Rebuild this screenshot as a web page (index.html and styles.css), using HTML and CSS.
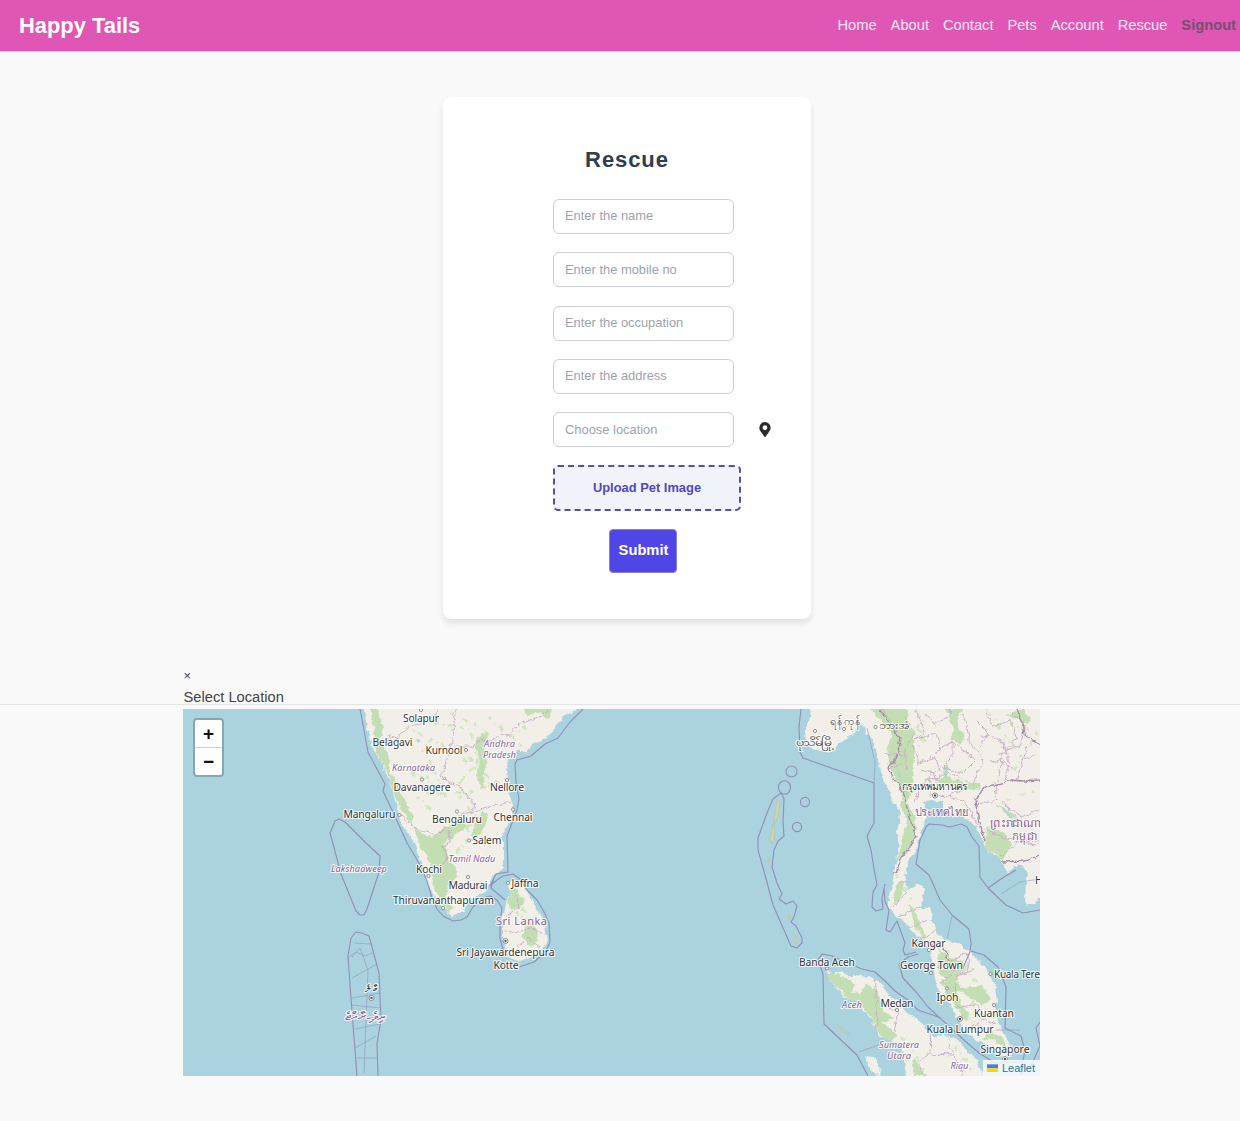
FILE: index.html
```html
<!DOCTYPE html>
<html lang="en">
<head>
<meta charset="utf-8">
<title>Happy Tails</title>
<link rel="stylesheet" href="styles.css">
</head>
<body>
<header class="navbar">
  <div class="brand">Happy Tails</div>
  <nav class="links"><a>Home</a><a>About</a><a>Contact</a><a>Pets</a><a>Account</a><a>Rescue</a><a class="signout">Signout</a></nav>
</header>
<main>
  <form class="card">
    <h1>Rescue</h1>
    <input type="text" placeholder="Enter the name">
    <input type="text" placeholder="Enter the mobile no">
    <input type="text" placeholder="Enter the occupation">
    <input type="text" placeholder="Enter the address">
    <div class="location">
      <input type="text" placeholder="Choose location">
      <svg class="pin" viewBox="0 0 384 512"><path d="M172 502C27 291 0 270 0 192a192 192 0 0 1 384 0c0 78-27 99-172 310a24 24 0 0 1-40 0zM192 272a80 80 0 1 0 0-160 80 80 0 0 0 0 160z"/></svg>
    </div>
    <label class="upload">Upload Pet Image</label>
    <button type="button" class="submit">Submit</button>
  </form>
  <section class="picker">
    <div class="picker-head"><div class="close">×</div><div class="picker-title">Select Location</div></div>
    <div class="map">
      <svg class="tiles" viewBox="183 709 857 367">
        <defs>
          <filter id="rough" filterUnits="userSpaceOnUse" x="183" y="700" width="870" height="390">
            <feTurbulence type="fractalNoise" baseFrequency=".16" numOctaves="3" seed="4"/>
            <feDisplacementMap in="SourceGraphic" scale="6" xChannelSelector="R" yChannelSelector="G"/>
          </filter>
          <clipPath id="land">
            <path id="india" d="M362 700L367 727 370 742 377 755 382 763 387 776 390 780 396 803 400 820 410 835 415 845 423 870 430 890 437 900 443 908 453 916 463 911 467 903 475 897 487 891 490 880 494 875 504 867 504 842 501 838 505 828 512 815 513 803 509 797 508 783 506 770 509 759 517 750 522 750 527 753 532 745 542 740 547 736 553 733 557 723 565 716 577 709 580 700z"/>
            <path id="lanka" d="M507 884L515 879 527 890 535 907 545 923 547 943 538 955 520 962 508 957 503 940 503 917 507 900 511 893z"/>
            <path id="asia" d="M812 700L809 723 805 731 806 745 814 749 820 752 824 748 830 753 838 744 847 738 855 733 858 723 865 727 873 743 877 755 880 767 887 787 893 803 900 810 899 823 897 833 899 840 898 850 895 867 892 887 888 897 888 907 896 916 903 920 910 930 923 940 930 953 933 965 935 977 938 993 947 1002 953 1008 957 1020 963 1029 973 1038 985 1044 997 1053 1005 1059 1012 1055 1012 1047 1005 1035 997 1020 995 1010 997 1000 995 987 989 974 985 967 970 952 958 943 947 940 937 935 932 917 930 907 923 908 922 899 925 889 918 884 908 890 905 876 907 867 911 857 917 847 922 830 927 817 925 803 930 800 943 802 943 813 949 817 960 815 971 821 980 833 982 841 987 850 997 856 1003 863 1007 873 1018 865 1027 870 1026 880 1025 905 1033 903 1050 893V700z"/>
            <path id="sumatra" d="M827 968L831 972 840 972 852 977 862 975 873 977 881 984 887 993 897 1001 907 1013 923 1023 930 1033 936 1036 943 1034 952 1042 961 1043 968 1052 976 1058 977 1066 992 1085H907L904 1060 900 1047 892 1041 880 1037 875 1028 873 1020 864 1011 857 1003 845 997 837 987 829 981z"/>
          </clipPath>
        </defs>
        <rect class="sea" x="183" y="709" width="858" height="368"/>
        <g filter="url(#rough)">
        <g class="ground"><use href="#india"/><use href="#lanka"/><use href="#asia"/><use href="#sumatra"/><path d="M865 1055L874 1058 881 1070 880 1076 871 1071zM947 1036l8 2 7 9-6 1z"/></g>
        <g clip-path="url(#land)">
          <g class="forest">
            <path d="M371 700L378 711 383 727 380 741 389 756 391 772 397 785 405 801 414 817 411 823 402 811 395 796 390 779 384 766 376 751zM413 825L423 835 433 837 444 827 455 825 463 820 467 828 454 835 444 843 447 858 456 867 458 877 449 884 445 898 455 908 449 913 441 902 433 884 430 862 419 843zM478 737L488 733 484 751 488 761 482 776 486 790 477 781 479 762 476 748zM519 700L527 716 539 712 549 719 555 700zM483 811L488 817 482 834 470 842 474 825zM513 884L520 896 525 899 520 907 510 910 508 900zM526 918L537 930 538 941 530 947 522 938 525 929z"/>
            <path d="M862 700H909L907 722 914 736 914 748 914 761 913 791 907 803 914 815 917 837 907 854 897 861 904 834 908 820 900 805 903 791 897 784 889 762 887 747 892 735 884 724zM946 709L963 709 956 721 965 738 960 745 950 738 954 729zM933 779L948 777 964 783 979 784 981 789 960 790 949 786zM945 762l4 6-3 7-4-3zM1005 715l18-6 8 9-5 5-12-5zM987 826L1004 832 1011 844 1003 861 994 853 985 849zM995 804l12 5 11 10-8-1zM897 884L904 881 900 902 893 904zM908 903l7 7 5 15 7 13-4 2-8-16zM938 950L951 958 963 960 964 970 955 978 961 988 984 986 990 1000 982 1006 965 993 951 991 946 979 939 974zM941 979l12 4 8 18 3 12-9-6-8-12zM962 1006l8 8-4 8-6-9zM992 1031l9 5 6 14-7-5-8-6-10 2 5-7z"/>
            <path d="M829 971L844 976 854 983 852 993 861 992 867 984 878 992 883 1011 894 1018 881 1023 889 1028 897 1036 887 1044 878 1031 872 1018 861 1006 850 1001 839 988 829 981zM912 1058l8 9 7 9h-12zM899 1049l12 7-4 4z"/>
          </g>
          <g class="flecks">
            <path d="M450 714l28 12 22 22 27-22M406 727l37 19 53 36-29 12-35-8M399 765l50 31-42-8M418 796l22 25 29 3-3 21-20 13M516 912l22 20-7 17M892 711l33 30-22 18M920 729l-25 32 15 57-7 28M927 713l-17 25M990 713l32 45-10 17M1010 724l28 9-12 18M961 770l-28 17 36-2M1007 800l29-9M896 875l16 25M945 951l35 34-10 24M947 978l29-9-34-7M967 1016l30 27M864 1024l42 15 20 34M955 1047l18 25"/>
            <path d="M435 723l35 6 7 34-20 23M489 718l33 27M459 797l20 24-20 10M422 749l20 35M427 777l20 19M461 745l18 29M516 896l12 21"/>
          </g>
          <g class="admin">
            <path d="M388 745L390 735 397 739 402 733 414 725 421 724 429 718 437 714 437 709M457 709L455 713 454 723 452 740 448 754 446 766 440 775 446 781 453 784 461 787 468 798 475 804 473 812 460 814 452 825 436 834 421 831 408 822 400 815M455 746l18 0 8-6 10 1 9-7 8 2 11-12 22-8 14-12M471 813l15-5 10-3 15-3M449 829l1 13-7 5 4 12-7 9M516 895l3 12-12 8M505 931l14 2 10-6 12 7M517 946l11-8 12 9"/>
            <path d="M882 709l13 18 6 15-6 20-8 2M904 716l11 17-10 15 2 22M916 709l8 21-11 14 5 19 18-5 4 14M920 738l16-4 5 14-15 12M951 741l25 19-13 13-23-6M963 713l8 31 13 15-12 27M986 709l6 17 19-5 6 18-14 15-5 27M1012 713l13 13-6 20-22 8M1027 747l-10 35 15-3M968 781l-19-8-27 10-8 21M930 770l0 25 18 2 15-9M949 796l16 6 15 27M995 781l2 20-22 3M1001 802l20 15 18-7M979 826l26 12 34 3M1001 856l17-14 21 2M884 753l20 2M889 769l13-5M899 884l23-10M890 910l17-18M899 916l26-11M910 928l17-9M922 939l16-10M938 969l13-7 12-9 7 5-3 15M940 983l11-7 7-12M955 1001l1-25 19-6M957 1007l19-2 7 9M970 1029l14-10 13 6M874 977l4 40-4 18M888 1007l10 5-4 20M930 1030l1 23-12 9 4 14M930 1054l23 1M949 1044l14 31"/>
            <path d="M925 715l10 8 12-4 5-10M940 748l12-6 0 14-8 8 5 9M980 735l18 3 8 14M975 720l14 14-10 14M990 762l12-2 12 10M1003 740l6 22-4 18M1025 760l10-5M920 770l14 3 3 10"/>
          </g>
          <path class="nation" d="M879 709L890 724 900 738 897 757 888 768 892 777 903 791 908 812 917 837 902 857 897 871 877 885M1050 779L1026 781 1011 780 1002 783 985 787 975 800 979 822 985 840 979 846M1040 745L1025 735 1023 723 1017 709M1003 862L1025 861 1040 855M932 943L943 949 950 961"/>
        </g>
        </g>
        <g class="maritime">
          <path d="M360 709L364 730 368 752 378 771 385 784 383 791 391 808 398 823 407 843 420 865 427 881 432 898 437 909 443 916 453 921 461 920 467 917 473 907 483 898 490 896 497 900 502 908 500 925 500 939 505 955M583 709L570 722 558 738 545 744 531 756 517 760 515 764 516 782 519 799 517 810 512 823 507 836 508 872 496 874 490 886 497 880 503 876 513 874 520 879 526 889 537 900 543 910 549 923 550 942 545 953 534 962 519 967M494 878l-3 10 14 12"/>
          <path d="M332 840L330 833 335 821 339 819 345 822 366 843 380 856 379 872 367 909 364 915 360 915 356 911 341 874zM357 1076L350 985 348 956 351 938 356 932 362 933 369 936 379 973 381 1020 377 1043 378 1076"/>
          <path d="M801 709L799 727 800 752 803 758 874 783 874 823 867 836 871 850 874 869 877 885 873 892 872 907 876 911 883 909 882 898 885 884M884 888L885 902 889 910 886 930 890 932 897 921 905 943 903 950 905 955 916 952M781 793L784 799 783 822 784 836 778 841 774 850 772 867 777 883 782 894 779 899 786 904 793 901 797 906 794 917 791 922 796 926 802 938 802 943 797 948 791 946 773 905 765 875 758 850 758 838 767 813 773 799z"/>
          <circle cx="791.5" cy="771.5" r="5.5"/><ellipse cx="784.5" cy="787.5" rx="6" ry="6.8"/><circle cx="805" cy="802" r="4.6"/><circle cx="797" cy="827" r="4.6"/>
          <path d="M916 864L920 840 926 827 929 824 942 825 950 827 961 824 967 827 972 837 979 846 980 877 988 888 1006 905 1023 913 1040 910M988 888l16-11 12-7M916 864L929 875 934 886 940 900 953 916 969 929 971 943 970 952 962 970M971 951l13 4 14 12 8 20-1 41 16 8 4 15-5 23 11-8 9-20-4-18 12-17M899 964L908 957 918 954M899 964L903 978 917 993 928 1007 965 1041 979 1053 995 1063 1026 1062"/>
          <path d="M818 960L822 954 832 956 847 963 862 969 875 972 885 981 895 991 908 1000 918 1010 941 1018M818 960L823 974 824 1024 841 1040 857 1055 868 1076"/>
          <path class="thin" d="M352 957l8-9 8 22-4 103M354 943l16 1M349 957l7-5 9 4 8-3M352 978l25-14M352 998l28-5M352 1005l28 3M355 1029l25-5M355 1048l21-12M357 1058h20M952 916l-5 24M1001 894l19-12 20-3M996 1030h24M867 728l8 34-1 22M859 1052l22-8"/>
        </g>
        <g class="isles"><path d="M777 799l3 4-2 14-4 7 1 12-3 9-2-6 3-13zM769 858l-2 4 1 3zM795 934l3 7-3 3zM789 914l2 3-3 2zM836 1024l14 10-8-3z"/></g>
        <g class="inlets"><path d="M925 802h18v7h-18zM1003 806l10 13-5-3zM416 739l5 1-3 3zM948 763l-1 13-3 2zM897 766l5 16-3-4z"/></g>
        <g class="dots"><circle cx="421" cy="710" r="1.6"/><circle cx="466" cy="750" r="1.6"/><circle cx="422" cy="779.5" r="1.6"/><circle cx="507" cy="780" r="1.6"/><circle cx="399.5" cy="815" r="1.6"/><circle cx="457" cy="811.5" r="1.6"/><circle cx="513" cy="809.5" r="1.6"/><circle cx="469" cy="840.5" r="1.6"/><circle cx="428.5" cy="876" r="1.6"/><circle cx="468" cy="877" r="1.6"/><circle cx="508" cy="883" r="1.6"/><circle cx="443" cy="908" r="1.6"/><circle cx="815" cy="731" r="1.6"/><circle cx="844" cy="729" r="1.6"/><circle cx="875.5" cy="727" r="1.6"/><circle cx="827" cy="968.5" r="1.6"/><circle cx="929" cy="950" r="1.6"/><circle cx="931" cy="973" r="1.6"/><circle cx="990.5" cy="974" r="1.6"/><circle cx="947" cy="988.5" r="1.6"/><circle cx="994" cy="1005" r="1.6"/><circle cx="897" cy="1010" r="1.6"/></g>
        <g class="capitals"><circle cx="505.5" cy="941" r="2.5"/><circle cx="371.5" cy="998" r="2.5"/><circle cx="935" cy="795.5" r="2.5"/><circle cx="960" cy="1019" r="2.5"/><circle cx="1005" cy="1059" r="2.5"/></g>
        <g class="capital-dots"><circle cx="505.5" cy="941" r="1.2"/><circle cx="371.5" cy="998" r="1.2"/><circle cx="935" cy="795.5" r="1.2"/><circle cx="960" cy="1019" r="1.2"/><circle cx="1005" cy="1059" r="1.2"/></g>
        <g class="city">
          <text x="421" y="722" textLength="36">Solapur</text><text x="392.5" y="746" textLength="40">Belagavi</text><text x="444" y="754" textLength="37">Kurnool</text><text x="422" y="791" textLength="57">Davanagere</text><text x="507" y="791" textLength="34">Nellore</text><text x="369.5" y="818" textLength="52">Mangaluru</text><text x="457" y="823" textLength="50">Bengaluru</text><text x="513" y="821" textLength="39">Chennai</text><text x="487" y="844" textLength="29">Salem</text><text x="429" y="872.5" textLength="26">Kochi</text><text x="468" y="888.5" textLength="39">Madurai</text><text x="525" y="887" textLength="27">Jaffna</text><text x="443.500" y="904" textLength="101">Thiruvananthapuram</text><text x="505.500" y="956" textLength="98">Sri Jayawardenepura</text><text x="506" y="968.5" textLength="25">Kotte</text>
          <text x="371" y="992" textLength="12">މާލެ</text><text x="844.5" y="725" textLength="30">ရန်ကုန်</text><text x="814.5" y="746" textLength="38" lengthAdjust="spacingAndGlyphs">ပုသိမ်မြို့</text><text x="894" y="729" textLength="30" lengthAdjust="spacingAndGlyphs">ဘားအံ</text><text x="935" y="790" textLength="66">กรุงเทพมหานคร</text>
          <text x="827" y="965.5" textLength="56">Banda Aceh</text><text x="928.5" y="947" textLength="34">Kangar</text><text x="931.5" y="968.5" textLength="63">George Town</text><text class="start" x="994" y="977.5" textLength="46">Kuala Tere</text><text x="947.5" y="1001" textLength="22">Ipoh</text><text x="897" y="1006.5" textLength="33">Medan</text><text x="994" y="1017" textLength="40">Kuantan</text><text x="960" y="1033" textLength="67">Kuala Lumpur</text><text x="1005" y="1053" textLength="49">Singapore</text><text class="start" x="1035" y="884" textLength="5">H</text>
        </g>
        <g class="region"><text x="499.5" y="746.5" textLength="31">Andhra</text><text x="499.5" y="758" textLength="33">Pradesh</text><text x="413.5" y="770.5" textLength="43">Karnataka</text><text x="472" y="861.5" textLength="47">Tamil Nadu</text><text x="359" y="872" textLength="56">Lakshadweep</text><text x="852" y="1008" textLength="20">Aceh</text><text x="899" y="1048" textLength="40">Sumatera</text><text x="899" y="1059" textLength="24">Utara</text><text x="959.5" y="1068.5" textLength="18">Riau</text></g>
        <g class="country"><text x="521.5" y="924.5" textLength="51">Sri Lanka</text><text x="365" y="1020" textLength="40" lengthAdjust="spacingAndGlyphs">ދިވެހިރާއްޖެ</text><text x="941" y="815.5" textLength="53">ประเทศไทย</text><text class="start" x="990" y="827" textLength="50" lengthAdjust="spacingAndGlyphs">ព្រះរាជាណា</text><text x="1024" y="840" textLength="25">កម្ពុជា</text></g>
      </svg>
      <div class="zoom"><span>+</span><span>−</span></div>
      <div class="credit"><svg viewBox="0 0 12 8"><path fill="#4c7be1" d="M0 0h12v4H0z"/><path fill="#ffd500" d="M0 4h12v3H0z"/><path fill="#e0bc00" d="M0 7h12v1H0z"/></svg>Leaflet</div>
    </div>
  </section>
</main>
</body>
</html>
```
FILE: styles.css
```css
* { box-sizing: border-box; }
body { margin: 0; min-height: 1121px; background: #f9f9f9; color: #444; font: 14.7px/22px "Liberation Sans", Arial, sans-serif; overflow: hidden; }
.navbar { height: 51px; padding: 0 4px 0 19px; display: flex; align-items: center; justify-content: space-between; background: #e056b5; box-shadow: 0 1px 0 #f6c0e6; color: #fff; }
.brand { font-size: 21.9px; font-weight: bold; }
.links { display: flex; gap: 13.9px; padding-bottom: 1px; color: #fde8f7; }
.signout { color: #75506d; font-weight: bold; }
.card { width: 368px; height: 522px; margin: 46px 0 0 443px; padding: 50px 0 0 110px; display: flex; flex-direction: column; align-items: flex-start; gap: 18.3px; background: #fff; border-radius: 8px; box-shadow: 0 4px 6px rgba(0,0,0,.1); }
.card h1 { align-self: stretch; margin: 0 110px 7.7px 0; font-size: 22px; line-height: 26px; letter-spacing: .92px; color: #2c3e50; text-align: center; white-space: nowrap; }
.card input { display: block; width: 181px; height: 35px; padding: 0 11px 1px; border: 1px solid #ccced2; border-radius: 6px; background: #fff; font: 12.9px "Liberation Sans", Arial, sans-serif; }
.card input::placeholder { color: #9ca3af; opacity: 1; }
.location { display: flex; align-items: center; gap: 24.5px; }
.pin { width: 12px; height: 15px; fill: #2b2b2b; }
.upload { width: 188px; height: 46px; margin-top: -.3px; padding-bottom: 1px; display: grid; place-items: center; border: 2px dashed #5848bd; border-radius: 5px; background: #f0f4fa; color: #5146c9; font-size: 12.9px; font-weight: bold; }
.submit { width: 68px; height: 44px; margin: -.4px 0 0 56px; padding: 0 0 2px 1px; border: 1px solid #8580d8; border-radius: 4px; background: #4f46e5; color: #fff; font: bold 14.7px "Liberation Sans", Arial, sans-serif; }
.picker-head { height: 86px; padding: 46px 0 0 183.5px; border-bottom: 1px solid #e2e3e5; }
.close { height: 21px; font-size: 13px; line-height: 21px; }
.picker-title { line-height: 22px; }
.map { position: relative; width: 857px; height: 367px; margin: 4px 0 0 183px; overflow: hidden; background: #aad3df; }
.tiles { display: block; width: 857px; height: 367px; }
.sea { fill: #aad3df; }
.ground { fill: #f2efe9; }
.forest { fill: #bbdba9; opacity: .85; }
.flecks { fill: none; stroke: #c3dfae; stroke-width: 3; stroke-dasharray: 3 5 1 4 6 7; opacity: .65; }
.admin { fill: none; stroke: #c6abc5; stroke-width: .9; }
.nation { fill: none; stroke: #a58aa7; stroke-width: 1.3; }
.maritime { fill: none; stroke: #8f8fb8; stroke-width: 1.1; stroke-linejoin: round; }
.maritime .thin { stroke-width: .55; }
.isles { fill: #c8d6b2; stroke: #bac8ac; stroke-width: 1; }
.inlets { fill: #aad3df; }
.dots, .capitals { fill: #fff; stroke: #666; stroke-width: .7; }
.capital-dots { fill: #555; }
.tiles text { text-anchor: middle; font-family: "Noto Sans", "DejaVu Sans", sans-serif; paint-order: stroke; stroke: rgba(255,255,255,.8); stroke-width: 2.2px; stroke-linejoin: round; }
.tiles text.start { text-anchor: start; }
.city { fill: #333; font-size: 10.4px; }
.region { fill: #8b6293; font-size: 9.3px; font-style: italic; }
.country { fill: #8b5b91; font-size: 11px; }
.zoom { position: absolute; left: 10px; top: 9px; width: 31px; height: 59px; border: 2px solid #84a8b2; border-radius: 4px; background: #fff; color: #111; font: bold 19px/28px "Liberation Sans", Arial, sans-serif; text-align: center; }
.zoom span { display: block; height: 27px; }
.zoom span + span { height: 28px; border-top: 1px solid #ccc; }
.credit { position: absolute; right: 0; bottom: 0; height: 16px; padding: 0 5px 0 4px; display: flex; align-items: center; gap: 4px; background: rgba(255,255,255,.8); color: #16789e; font-size: 11px; line-height: 16px; }
.credit svg { width: 11px; height: 8px; }
```
